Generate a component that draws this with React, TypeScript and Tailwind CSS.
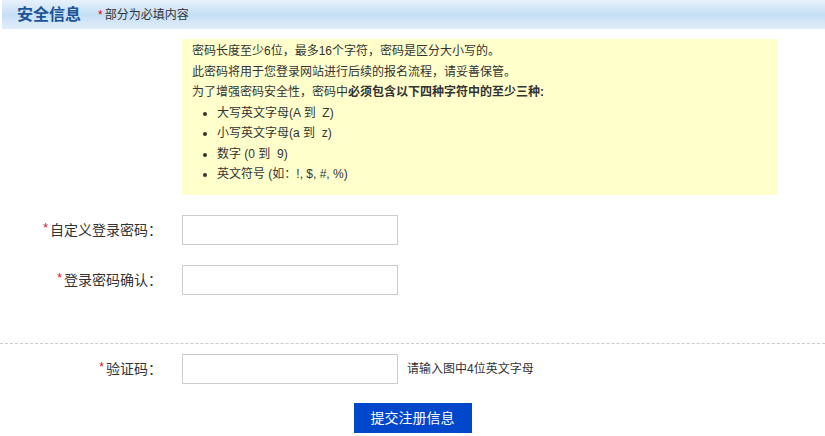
import React from 'react';

const font = { fontFamily: '"Liberation Sans", "Noto Sans CJK SC", sans-serif' };

function Row({ label, top, children }: { label: string; top: string; children?: React.ReactNode }) {
  return (
    <div className={`flex h-[30px] items-center overflow-hidden ${top}`}>
      <div className="flex h-[30px] w-[162px] items-center justify-end text-[14px] leading-[16px] text-[#333]">
        <span className="mb-[4px] mr-[2px] text-[12px] leading-[12px] text-[#e60012]">*</span>
        {label}
      </div>
      <input
        type="text"
        className="ml-[20px] h-[30px] w-[216px] border border-[#cccccc] bg-white outline-none"
      />
      {children}
    </div>
  );
}

export default function App() {
  return (
    <div className="h-[436px] w-[825px] overflow-hidden bg-white text-[#333]" style={font}>
      <div className="ml-[2px] flex h-[29px] items-center bg-gradient-to-b from-[#e8f1fb] via-[#c5dff5] to-[#e2edf9] pl-[15px]">
        <span className="text-[16px] font-bold text-[#1b5499]">安全信息</span>
        <span className="ml-[17px] text-[12px] text-[#333]">
          <span className="mr-[2px] text-[#e60012]">*</span>部分为必填内容
        </span>
      </div>

      <div className="ml-[182px] mt-[10px] h-[156px] w-[596px] overflow-hidden bg-[#ffffcc] pl-[10px] pt-[2px] text-[12px] leading-[20.5px]">
        <p>密码长度至少6位，最多16个字符，密码是区分大小写的。</p>
        <p>此密码将用于您登录网站进行后续的报名流程，请妥善保管。</p>
        <p>
          为了增强密码安全性，密码中<b>必须包含以下四种字符中的至少三种:</b>
        </p>
        <ul className="ml-[25px] list-disc marker:text-[#333]">
          <li>大写英文字母(A 到&nbsp; Z)</li>
          <li>小写英文字母(a 到&nbsp; z)</li>
          <li>数字&nbsp;(0 到&nbsp; 9)</li>
          <li>英文符号&nbsp;(如：!, $, #, %)</li>
        </ul>
      </div>

      <Row label="自定义登录密码：" top="mt-[20px]" />
      <Row label="登录密码确认：" top="mt-[20px]" />

      <div className="mt-[48px] border-t border-dashed border-[#cccccc]" />

      <Row label="验证码：" top="mt-[10px]">
        <span className="ml-[9px] text-[12px]">请输入图中4位英文字母</span>
      </Row>

      <div className="mt-[19px] flex justify-center">
        <button className="h-[30px] w-[118px] bg-[#0047cc] text-[14px] text-white">提交注册信息</button>
      </div>
    </div>
  );
}
